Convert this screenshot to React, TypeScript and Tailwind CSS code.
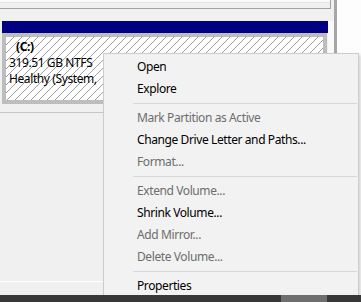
import React from "react";

const font = { fontFamily: '"Noto Sans", "Open Sans", sans-serif' };

function Hatch() {
  return (
    <svg className="absolute inset-0" width="100%" height="100%" shapeRendering="crispEdges">
      <defs>
        <pattern id="hatch" width="8" height="8" patternUnits="userSpaceOnUse">
          <rect width="8" height="8" fill="#ffffff" />
          {[0, 1, 2, 3, 4, 5, 6, 7].map((i) => (
            <rect key={i} x={7 - i} y={i} width="1" height="1" fill="#a0a0a0" />
          ))}
        </pattern>
      </defs>
      <rect width="100%" height="100%" fill="url(#hatch)" />
    </svg>
  );
}

type Item = { label: string; disabled?: boolean } | "sep";

const items: Item[] = [
  { label: "Open" },
  { label: "Explore" },
  "sep",
  { label: "Mark Partition as Active", disabled: true },
  { label: "Change Drive Letter and Paths..." },
  { label: "Format...", disabled: true },
  "sep",
  { label: "Extend Volume...", disabled: true },
  { label: "Shrink Volume..." },
  { label: "Add Mirror...", disabled: true },
  { label: "Delete Volume...", disabled: true },
  "sep",
  { label: "Properties" },
];

export default function App() {
  return (
    <div
      className="relative w-[361px] h-[302px] overflow-hidden bg-[#f0f0f0] flex flex-col text-[12px] leading-[16px] tracking-[-0.4px] text-black"
      style={font}
    >
      <div className="flex flex-1 min-h-0">
        {/* main left column */}
        <div className="w-[334px] flex flex-col">
          {/* upper pane bottom edge */}
          <div className="w-[331px] h-[9px] border-b border-r border-[#a0a0a0] bg-[#f0f0f0]">
            <div className="h-[3px] bg-[#f9f9f9] border-b border-[#e3e3e3]" />
          </div>
          <div className="h-[12px]" />
          {/* disk row */}
          <div className="flex">
            <div className="flex flex-col ml-[2px]">
              <div className="w-[326px] h-[12px] bg-[#000080]" />
              <div className="w-[325px] h-[71px] bg-[#bdbdbd] p-[4px]">
                <div className="relative h-full overflow-hidden">
                  <Hatch />
                  <div className="relative pt-[2px] pl-[3px] whitespace-nowrap">
                    <div className="pl-[7px] font-bold">(C:)</div>
                    <div>319.51 GB NTFS</div>
                    <div>Healthy (System,</div>
                  </div>
                </div>
              </div>
            </div>
            <div className="flex-1 bg-[#fafafa]" />
          </div>
          <div className="h-[8px]" />
          <div className="h-px bg-[#c6c6c6]" />
          <div className="flex-1" />
          <div className="h-px bg-white" />
          <div className="h-[13px]" />
        </div>
        <div className="w-[3px] bg-[#a6a6a6]" />
        <div className="flex-1 bg-[#fdfdfd]" />
      </div>

      {/* taskbar */}
      <div className="relative z-10 h-[7px] bg-[#383838] flex">
        <div className="w-[281px]" />
        <div className="w-[46px] bg-[#6e6e6e]" />
      </div>

      {/* context menu */}
      <div className="absolute left-[103px] top-[53px] w-[256px] h-[260px] bg-[#f2f2f2] border border-[#cccccc] pt-[2px] shadow-[2px_2px_3px_rgba(0,0,0,0.15)]">
        {items.map((it, idx) =>
          it === "sep" ? (
            <div key={idx} className="h-[7px] flex items-center">
              <div className="ml-[29px] mr-[1px] flex-1 h-px bg-[#d7d7d7]" />
            </div>
          ) : (
            <div
              key={idx}
              className={
                "h-[22px] flex items-center pl-[33px] whitespace-nowrap " +
                (it.disabled ? "text-[#6d6d6d]" : "text-black")
              }
            >
              {it.label}
            </div>
          )
        )}
      </div>
    </div>
  );
}
